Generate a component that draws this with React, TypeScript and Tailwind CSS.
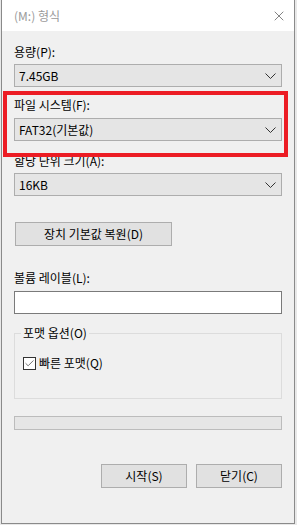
import { Check, X } from "lucide-react";

const font = { fontFamily: '"Noto Sans CJK KR", "Noto Sans", sans-serif' };

function Chevron() {
    return (
        <svg width="11" height="6" viewBox="0 0 11 6" className="shrink-0">
            <polyline points="0.5,0.5 5.5,5.5 10.5,0.5" fill="none" stroke="#333" strokeWidth="1" />
        </svg>
    );
}

function Combo({ value }: { value: string }) {
    return (
        <div className="ml-[12px] w-[268px] h-[23px] flex items-center justify-between border border-[#adadad] bg-[#e5e5e5] pl-[4px] pr-[5px] text-[12px] text-black">
            <span>{value}</span>
            <Chevron />
        </div>
    );
}

function Label({ text, className }: { text: string; className: string }) {
    return <div className={`ml-[12px] h-[16px] leading-[16px] text-[12px] text-black ${className}`}>{text}</div>;
}

export default function App() {
    return (
        <div className="relative w-[297px] h-[525px] bg-[#e8e8e8] overflow-hidden" style={font}>
            {/* WINDOW */}
            <div className="ml-[1px] w-[294px] h-[524px] border-x border-b border-[#8a8a8a] bg-[#f0f0f0] flex flex-col">
                {/* TITLE BAR */}
                <div className="h-[31px] bg-white flex items-center justify-between pl-[12px] pr-[7px]">
                    <span className="text-[12px] text-[#9a9a9a]">(M:) 형식</span>
                    <X size={16} strokeWidth={1} color="#444" />
                </div>

                <Label text="용량(P):" className="mt-[13px]" />
                <div className="mt-[4px]"><Combo value="7.45GB" /></div>

                <Label text="파일 시스템(F):" className="mt-[10px]" />
                <div className="mt-[5px]"><Combo value="FAT32(기본값)" /></div>

                <Label text="할당 단위 크기(A):" className="mt-[12px]" />
                <div className="mt-[4px]"><Combo value="16KB" /></div>

                <button className="ml-[13px] mt-[26px] w-[157px] h-[24px] border border-[#adadad] bg-[#e1e1e1] text-[12px] text-black flex items-center justify-center">
                    장치 기본값 복원(D)
                </button>

                <Label text="볼륨 레이블(L):" className="mt-[24px]" />
                <div className="ml-[12px] mt-[5px] w-[268px] h-[23px] border border-[#7a7a7a] bg-white"></div>

                {/* FORMAT OPTIONS */}
                <div className="relative ml-[12px] mt-[19px] w-[268px] h-[66px] border border-[#dcdcdc]">
                    <span className="absolute left-[6px] -top-[9px] px-[2px] bg-[#f0f0f0] text-[12px] leading-[16px] text-black">포맷 옵션(O)</span>
                    <div className="mt-[21px] ml-[8px] flex items-center gap-[3px]">
                        <div className="w-[13px] h-[13px] border border-[#333] bg-white flex items-center justify-center">
                            <Check size={11} strokeWidth={1.5} color="#333" />
                        </div>
                        <span className="text-[12px] leading-[16px] text-black">빠른 포맷(Q)</span>
                    </div>
                </div>

                {/* PROGRESS */}
                <div className="ml-[12px] mt-[17px] w-[268px] h-[14px] border border-[#bcbcbc] bg-[#e6e6e6]"></div>

                {/* BUTTONS */}
                <div className="mt-[34px] ml-[99px] flex gap-[9px]">
                    <button className="w-[86px] h-[24px] border border-[#adadad] bg-[#e1e1e1] text-[12px] text-black flex items-center justify-center">시작(S)</button>
                    <button className="w-[86px] h-[24px] border border-[#adadad] bg-[#e1e1e1] text-[12px] text-black flex items-center justify-center">닫기(C)</button>
                </div>
            </div>

            {/* RED HIGHLIGHT */}
            <div className="absolute left-[3px] top-[91px] w-[285px] h-[66px] border-[4px] border-[#ec1c24]"></div>
        </div>
    );
}
